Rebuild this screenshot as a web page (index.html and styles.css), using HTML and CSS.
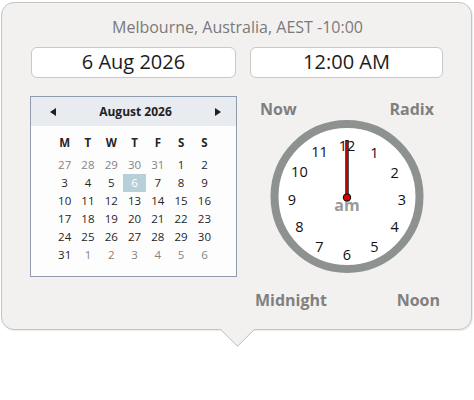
FILE: index.html
```html
<!DOCTYPE html>
<html>
<head>
<meta charset="utf-8">
<link rel="stylesheet" href="styles.css">
</head>
<body>
<div class="stage">
<div class="popup">
  <div class="title">Melbourne, Australia, AEST -10:00</div>
  <div class="fields">
    <div class="field date">6 Aug 2026</div>
    <div class="field time">12:00 AM</div>
  </div>
  <div class="body">
    <div class="cal">
      <div class="cal-head">
        <span class="arrow prev"></span>
        <span class="cal-title">August 2026</span>
        <span class="arrow next"></span>
      </div>
      <div class="dows">
        <span>M</span><span>T</span><span>W</span><span>T</span><span>F</span><span>S</span><span>S</span>
      </div>
      <div class="days">
        <span class="other">27</span><span class="other">28</span><span class="other">29</span><span class="other">30</span><span class="other">31</span><span>1</span><span>2</span>
        <span>3</span><span>4</span><span>5</span><span class="sel">6</span><span>7</span><span>8</span><span>9</span>
        <span>10</span><span>11</span><span>12</span><span>13</span><span>14</span><span>15</span><span>16</span>
        <span>17</span><span>18</span><span>19</span><span>20</span><span>21</span><span>22</span><span>23</span>
        <span>24</span><span>25</span><span>26</span><span>27</span><span>28</span><span>29</span><span>30</span>
        <span>31</span><span class="other">1</span><span class="other">2</span><span class="other">3</span><span class="other">4</span><span class="other">5</span><span class="other">6</span>
      </div>
    </div>
    <div class="clock-panel">
      <div class="labels top"><span class="lbl">Now</span><span class="lbl">Radix</span></div>
      <svg class="clock" width="160" height="156" viewBox="0 0 160 156">
        <circle cx="80" cy="76.5" r="72.5" fill="#ffffff" stroke="#8d9290" stroke-width="8"/>
        <g class="nums" font-size="14.5" text-anchor="middle" dominant-baseline="central" fill="#111">
          <text x="80" y="25">12</text>
          <text x="107.5" y="32">1</text>
          <text x="127.6" y="52">2</text>
          <text x="135" y="79">3</text>
          <text x="127.6" y="106.5">4</text>
          <text x="107.5" y="126.6">5</text>
          <text x="80" y="134">6</text>
          <text x="52.5" y="126.6">7</text>
          <text x="32.4" y="106.5">8</text>
          <text x="25" y="79">9</text>
          <text x="32.4" y="51.5">10</text>
          <text x="52.5" y="31.4">11</text>
        </g>
        <text class="ampm" x="80" y="85" text-anchor="middle" dominant-baseline="central">am</text>
        <line x1="80" y1="77" x2="80" y2="20" stroke="#1a1a1a" stroke-width="3.5"/>
        <line x1="80" y1="76" x2="80" y2="21" stroke="#e00000" stroke-width="1.6"/>
        <circle cx="80" cy="77.5" r="3.6" fill="#e00000" stroke="#111" stroke-width="1.2"/>
      </svg>
      <div class="labels bottom"><span class="lbl">Midnight</span><span class="lbl">Noon</span></div>
    </div>
  </div>
</div>
</div>
</body>
</html>
```
FILE: styles.css
```css
* { box-sizing: border-box; }
html, body { margin: 0; padding: 0; background: #ffffff; }
body {
  font-family: "Open Sans", "Noto Sans", "DejaVu Sans", sans-serif;
  color: #222;
}
.stage {
  width: 474px;
  height: 400px;
  padding: 2px 0 0 1px;
  background: #ffffff;
}
.popup {
  position: relative;
  width: 471px;
  height: 328px;
  border: 1px solid #c4c4c4;
  border-radius: 13px;
  background: #f2f1f0;
  box-shadow: 1px 1px 1px rgba(0,0,0,0.08);
  padding: 0 27px 0 29px;
}
.popup::after {
  content: "";
  position: absolute;
  left: 223px;
  top: 314px;
  width: 24px;
  height: 24px;
  background: #f2f1f0;
  border-right: 1.3px solid #c4c4c4;
  border-bottom: 1.3px solid #c4c4c4;
  border-bottom-right-radius: 2px;
  transform: rotate(45deg);
}
.title {
  padding-top: 14px;
  line-height: 20px;
  height: 34px;
  text-align: center;
  font-size: 16px;
  color: #7a7a7a;
}
.fields {
  display: flex;
  gap: 14px;
  margin-top: 10px;
}
.field {
  height: 31px;
  background: #ffffff;
  border: 1.5px solid #c8c8c8;
  border-radius: 6px;
  font-size: 20px;
  line-height: 28px;
  text-align: center;
  color: #1c1c1c;
}
.field.date { width: 205px; }
.field.time { width: 193px; }
.body {
  display: flex;
  margin-top: 18px;
}
.cal {
  margin-left: -1px;
  width: 207px;
  height: 181px;
  border: 1px solid #8e9cad;
  background: #fdfdfd;
}
.cal-head {
  height: 29px;
  background: #e8ecf1;
  display: flex;
  align-items: center;
  justify-content: space-between;
  padding: 0 15px 0 19px;
}
.cal-title {
  font-size: 12px;
  font-weight: 700;
  color: #222;
}
.arrow {
  width: 0;
  height: 0;
  border-top: 4.5px solid transparent;
  border-bottom: 4.5px solid transparent;
}
.arrow.prev { border-right: 6px solid #1e1e1e; }
.arrow.next { border-left: 6px solid #1e1e1e; }
.dows, .days {
  display: grid;
  grid-template-columns: repeat(7, 23.3px);
  margin-left: 22px;
  font-size: 11.5px;
  text-align: center;
}
.dows {
  margin-top: 8px;
  height: 18px;
  line-height: 18px;
  font-weight: 700;
  color: #262626;
}
.days {
  margin-top: 4px;
  grid-auto-rows: 18.1px;
  line-height: 18.1px;
  color: #262626;
}
.days .other { color: #858585; }
.days .sel { background: #b6d0da; color: #ffffff; }
.clock-panel {
  margin-left: 13px;
  width: 193px;
}
.labels {
  display: flex;
  justify-content: space-between;
}
.labels.top {
  height: 24px;
  padding: 2px 9px 0 10px;
  line-height: 22px;
}
.labels.bottom {
  margin-top: 14px;
  line-height: 20px;
  padding: 0 3px 0 5px;
}
.lbl {
  font-size: 16px;
  font-weight: 700;
  color: #808080;
}
.clock {
  display: block;
  margin: 0 auto;
}
.clock .nums text {
  font-family: "Open Sans", "Noto Sans", sans-serif;
}
.clock .ampm {
  font-family: "Open Sans", sans-serif;
  font-size: 16px;
  font-weight: 700;
  fill: #9a9a9a;
}
```
